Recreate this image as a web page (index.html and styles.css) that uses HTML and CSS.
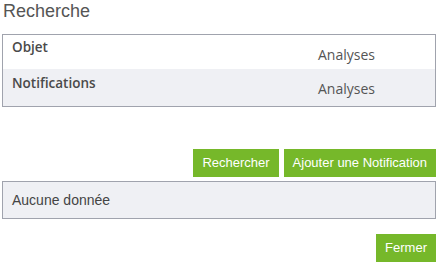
FILE: index.html
```html
<!DOCTYPE html>
<html lang="fr">
<head>
  <meta charset="UTF-8">
  <title>Recherche</title>
  <link rel="stylesheet" href="styles.css">
</head>
<body>
  <div class="page">
    <h1 class="title">Recherche</h1>

    <div class="criteria">
      <div class="row">
        <div class="label">Objet</div>
        <div class="value">Analyses</div>
      </div>
      <div class="row alt">
        <div class="label">Notifications</div>
        <div class="value">Analyses</div>
      </div>
    </div>

    <div class="actions">
      <button class="btn">Rechercher</button>
      <button class="btn">Ajouter une Notification</button>
    </div>

    <div class="empty">Aucune donnée</div>

    <div class="footer">
      <button class="btn">Fermer</button>
    </div>
  </div>
</body>
</html>
```

FILE: styles.css
```css
body {
  margin: 0;
  background: #fff;
}

.page {
  padding: 0 2px;
}

.title {
  margin: 0 0 0 1px;
  padding-top: 1px;
  height: 33px;
  font: normal 18px/21px "Liberation Sans", Arial, sans-serif;
  color: #555;
}

/* bloc des critères */
.criteria {
  border: 1px solid #a0a3ad;
}

.row {
  display: grid;
  grid-template-columns: 305px 1fr;
  height: 34px;
}

.row.alt {
  height: 37px;
  background: #eff0f4;
}

.label {
  padding: 3px 0 0 9px;
  font: 600 13.5px/19px "Open Sans", sans-serif;
  color: #4a4a4a;
}

.row.alt .label {
  padding-top: 5px;
}

.value {
  padding: 10px 0 0 10px;
  font: normal 14px/19px "Open Sans", sans-serif;
  color: #555;
}

.actions {
  display: flex;
  justify-content: flex-end;
  gap: 5px;
  margin-top: 42px;
}

.btn {
  height: 28px;
  padding: 0 9px;
  border: 0;
  background: #76b82a;
  color: #fff;
  font: normal 13px/28px "Liberation Sans", Arial, sans-serif;
}

.empty {
  margin-top: 4px;
  height: 38px;
  padding: 10px 9px 0;
  box-sizing: border-box;
  border: 1px solid #a0a3ad;
  background: #eff0f4;
  font: normal 14px/16px "Liberation Sans", Arial, sans-serif;
  color: #444;
}

.footer {
  display: flex;
  justify-content: flex-end;
  margin-top: 15px;
}
```
